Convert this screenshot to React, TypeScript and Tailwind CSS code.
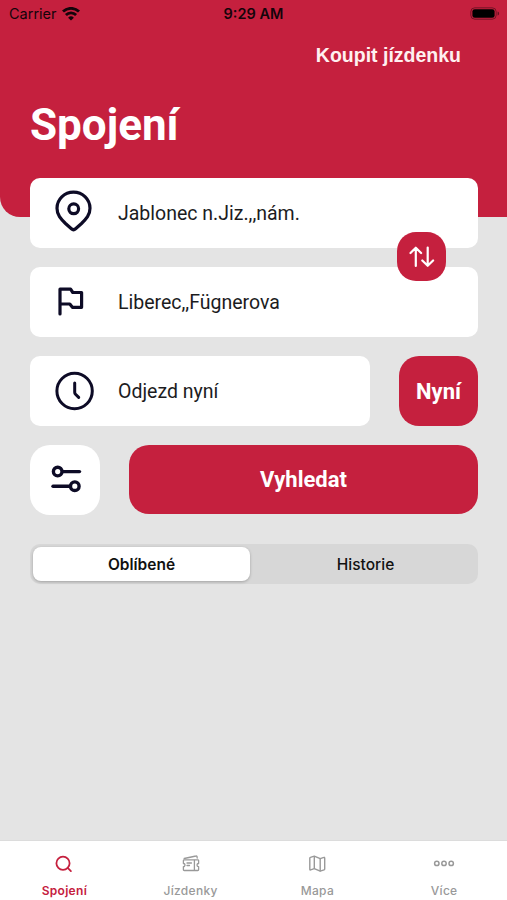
import type { ReactNode } from 'react';

function WifiIcon() {
  return (
    <svg width="18" height="14" viewBox="0 0 18 14" fill="none" stroke="#14040a" strokeWidth="2.8">
      <path d="M1 4.600a11.400 11.400 0 0 1 16 0" />
      <path d="M3.900 8a7.200 7.200 0 0 1 10.200 0" />
      <path d="M9 13.600 6.100 10.700a4.100 4.100 0 0 1 5.800 0Z" fill="#14040a" stroke="none" />
    </svg>
  );
}

function BatteryIcon() {
  return (
    <svg width="30" height="14" viewBox="0 0 30 14" fill="none">
      <rect x="0.8" y="0.8" width="25.4" height="11.4" rx="4" stroke="#14040a" strokeOpacity="0.45" />
      <rect x="2.4" y="2.2" width="22.2" height="8.6" rx="2.4" fill="#000" />
      <path d="M27.600 4.500v4c.9-.3 1.500-1.100 1.500-2s-.6-1.700-1.500-2Z" fill="#14040a" fillOpacity="0.55" />
    </svg>
  );
}

function PinIcon() {
  return (
    <svg className="-mt-1" width="40" height="44" viewBox="0 0 40 44" fill="none" stroke="#0d0b26" strokeWidth="3.200" strokeLinejoin="round">
      <path d="M19.500 3.100C10.300 3.100 3 10.200 3 19.200c0 6.800 3.800 10.800 8.500 15.300l5.900 5.300c1.200 1.100 3 1.100 4.200 0l5.900-5.300C32.200 30 36 26 36 19.200 36 10.200 28.700 3.100 19.500 3.100Z" />
      <circle cx="19.700" cy="19.800" r="4.900" />
    </svg>
  );
}

function FlagIcon() {
  return (
    <svg width="40" height="40" viewBox="0 0 40 40" fill="none" stroke="#0d0b26" strokeWidth="3.200" strokeLinecap="round" strokeLinejoin="round">
      <path d="M6 32V7.200h10.600l2.200 3.300h8.800v14.800h-9.200l-2.600-3.300H6" />
    </svg>
  );
}

function ClockIcon() {
  return (
    <svg width="40" height="40" viewBox="0 0 40 40" fill="none" stroke="#0d0b26" strokeWidth="3" strokeLinecap="round" strokeLinejoin="round">
      <circle cx="20.600" cy="20" r="17.700" />
      <path d="M20.700 12v9.200c0 .8.300 1.500.8 2l3.200 3.200" />
    </svg>
  );
}

function FiltersIcon() {
  return (
    <svg className="-mt-0.5 ml-0.5" width="32" height="28" viewBox="0 0 32 28" fill="none" stroke="#0d0b26" strokeWidth="3.400" strokeLinecap="round">
      <circle cx="7.700" cy="6.600" r="4.300" />
      <path d="M13 6.600h16.500" />
      <circle cx="24.800" cy="21.200" r="4.300" />
      <path d="M3 21.200h16.500" />
    </svg>
  );
}

function SwapIcon() {
  return (
    <svg width="28" height="24" viewBox="0 0 28 24" fill="none" stroke="#fff" strokeWidth="2.200" strokeLinecap="round" strokeLinejoin="round">
      <path d="M7.800 21V2.800M2.500 8l5.300-5.300 5.300 5.300" />
      <path d="M19.700 2.500v18.300M14.300 15.500l5.400 5.300 5.400-5.300" />
    </svg>
  );
}

function SearchIcon() {
  return (
    <svg width="20" height="20" viewBox="0 0 20 20" fill="none" stroke="currentColor" strokeWidth="1.800" strokeLinecap="round">
      <circle cx="9" cy="9.200" r="6.600" />
      <path d="m13.700 13.900 3.200 3.200" />
    </svg>
  );
}

function TicketIcon() {
  return (
    <svg width="20" height="20" viewBox="0 0 20 20" fill="none" stroke="currentColor" strokeWidth="1.300" strokeLinecap="round" strokeLinejoin="round">
      <path d="M3.200 5.800h13.600a.8.800 0 0 1 .8.800v2.900a1.600 1.600 0 0 0 0 3.200v3a.8.800 0 0 1-.8.800H3.200a.8.800 0 0 1-.8-.8v-3a1.600 1.600 0 0 0 0-3.200V6.600a.8.800 0 0 1 .8-.8Z" />
      <path d="M3.200 4.500 15 2a.8.800 0 0 1 1 .7l.2 1.300" />
      <path d="M6 9h4.500M6 11.500h2.500M13.400 6.500v9.500" />
    </svg>
  );
}

function MapIcon() {
  return (
    <svg width="20" height="20" viewBox="0 0 20 20" fill="none" stroke="currentColor" strokeWidth="1.400" strokeLinejoin="round">
      <path d="M2.800 4.200c0-.4.200-.7.600-.8l3.900-1.300 5.900 2.500 3.700-1.200c.4-.2.800.1.800.6v11.100c0 .4-.2.700-.6.800l-3.900 1.300-5.900-2.500-3.700 1.200c-.4.200-.8-.1-.8-.6Z" />
      <path d="M7.300 2.100v12.600M13.200 4.600v12.600" />
    </svg>
  );
}

function MoreIcon() {
  return (
    <svg width="22" height="20" viewBox="0 0 22 20" fill="none" stroke="currentColor" strokeWidth="1.500">
      <circle cx="3.800" cy="9.400" r="2.200" />
      <circle cx="11" cy="9.400" r="2.200" />
      <circle cx="18.200" cy="9.400" r="2.200" />
    </svg>
  );
}

function Field({ icon, children }: { icon: ReactNode; children: ReactNode }) {
  return (
    <div className="flex h-[70px] w-full items-center rounded-[10px] bg-white pl-6 text-[19.500px] text-[#1c1c1e]">
      <span className="flex w-16 shrink-0">{icon}</span>
      <span className="pt-0.5">{children}</span>
    </div>
  );
}

const tabs = [
  { label: 'Spojení', icon: <SearchIcon />, active: true },
  { label: 'Jízdenky', icon: <TicketIcon />, active: false },
  { label: 'Mapa', icon: <MapIcon />, active: false },
  { label: 'Více', icon: <MoreIcon />, active: false },
];

export default function App() {
  return (
    <div className="flex h-[900px] w-[507px] flex-col overflow-hidden bg-[#e4e4e4] font-['Roboto',sans-serif]">
      {/* Header */}
      <header className="h-[217px] shrink-0 rounded-bl-[20px] bg-[#c5203e]">
        <div className="grid h-7 grid-cols-3 items-center pr-[7px] pl-[9px] font-['Inter',sans-serif] text-[14.500px] text-[#14040a]">
          <div className="flex items-center gap-[5px]">
            <span>Carrier</span>
            <WifiIcon />
          </div>
          <span className="pr-0.5 text-center font-semibold whitespace-nowrap">9:29 AM</span>
          <div className="flex justify-end">
            <BatteryIcon />
          </div>
        </div>
        <div className="flex justify-end pt-[15px] pr-[46px]">
          <button className="font-['Liberation_Sans',sans-serif] text-[19.500px] leading-6 font-bold text-[#fff0f0]">
            Koupit jízdenku
          </button>
        </div>
        <h1 className="pt-[32px] pl-[30px] text-[44px] leading-[52px] font-bold text-white">Spojení</h1>
      </header>

      {/* Search form */}
      <main className="relative -mt-[39px] flex flex-1 flex-col pr-[29px] pl-[30px]">
        <div className="relative flex flex-col gap-[19px]">
          <Field icon={<PinIcon />}>Jablonec n.Jiz.,,nám.</Field>
          <Field icon={<FlagIcon />}>Liberec,,Fügnerova</Field>
          <button className="absolute top-[54px] right-[32px] flex h-[49px] w-[49px] items-center justify-center rounded-[19px] bg-[#c5203e]">
            <SwapIcon />
          </button>
        </div>

        <div className="mt-[19px] flex gap-[29px]">
          <Field icon={<ClockIcon />}>Odjezd nyní</Field>
          <button className="h-[70px] w-[79px] shrink-0 rounded-[20px] bg-[#c5203e] text-[22px] font-bold text-white">
            Nyní
          </button>
        </div>

        <div className="mt-[19px] flex gap-[29px]">
          <button className="flex h-[70px] w-[70px] shrink-0 items-center justify-center rounded-[20px] bg-white">
            <FiltersIcon />
          </button>
          <button className="h-[69px] flex-1 rounded-[20px] bg-[#c5203e] text-[22px] font-bold text-white">
            Vyhledat
          </button>
        </div>

        <div className="mt-[29px] flex h-[40px] rounded-[10px] bg-[#d7d7d7] p-[3px] font-['Inter',sans-serif] text-[15.500px] text-[#111]">
          <button className="w-[217px] rounded-[8px] bg-white pt-0.5 font-semibold shadow-[0_1px_3px_rgba(0,0,0,0.25)]">
            Oblíbené
          </button>
          <button className="flex-1 pt-0.5 pl-1.5 font-medium">Historie</button>
        </div>
      </main>

      {/* Tab bar */}
      <nav className="grid h-[60px] shrink-0 grid-cols-4 border-t border-[#dcdcdc] bg-white pt-[13px] font-['Inter',sans-serif] text-[12px] tracking-[0.3px]">
        {tabs.map((tab) => (
          <div
            key={tab.label}
            className={
              tab.active
                ? 'flex flex-col items-center gap-[9px] pl-0.5 font-semibold text-[#c5203e]'
                : 'flex flex-col items-center gap-[9px] pl-px font-medium text-[#999]'
            }
          >
            {tab.icon}
            <span className="leading-4">{tab.label}</span>
          </div>
        ))}
      </nav>
    </div>
  );
}
